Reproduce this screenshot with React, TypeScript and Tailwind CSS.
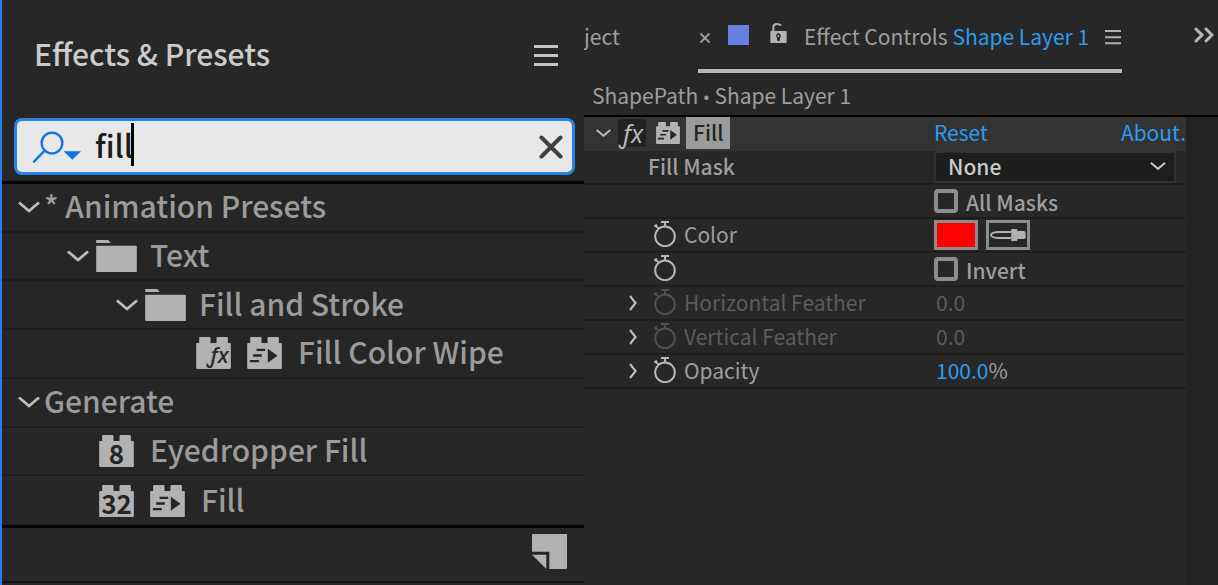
import { useState, type ReactNode } from "react";

const UI_FONT = "font-['Noto_Sans_CJK_SC','Noto_Sans',sans-serif]";

function ChevronDown({ className }: { className: string }) {
  return (
    <svg viewBox="0 0 22 14" className={className} fill="none" stroke="currentColor" strokeWidth="2.8" aria-hidden="true">
      <path d="M1 2.5 L11 11 L21 2.5" />
    </svg>
  );
}

function ChevronRight() {
  return (
    <svg viewBox="0 0 8 16" className="h-4 w-2" fill="none" stroke="currentColor" strokeWidth="2.1" aria-hidden="true">
      <path d="M1 1 L6.6 8 L1 15" />
    </svg>
  );
}

function Folder() {
  return (
    <svg viewBox="0 0 122 96" className="h-8 w-[41px] shrink-0" fill="#b2b2b2" aria-hidden="true">
      <path d="M0 0h36l8 9H0z" />
      <rect x="0" y="17" width="122" height="79" rx="2" />
    </svg>
  );
}

const BRICK = "M3 18 H9 V3 Q9 0 12 0 H40 Q43 0 43 3 V18 H61 V3 Q61 0 64 0 H92 Q95 0 95 3 V18 H101 Q104 18 104 21 V93 Q104 96 101 96 H3 Q0 96 0 93 V21 Q0 18 3 18 Z";

function Brick({ label, className = "h-8 w-[35px]" }: { label: string; className?: string }) {
  return (
    <svg viewBox="0 0 104 96" className={`${className} shrink-0 overflow-visible`} aria-hidden="true">
      <path d={BRICK} fill="#b2b2b2" />
      {label === "fx" ? (
        <text x="67" y="77" textAnchor="middle" className="fill-[#262626] font-['Noto_Sans'] text-[66px] italic">
          ƒx
        </text>
      ) : (
        <text x="52" y="86" textAnchor="middle" className="fill-[#262626] font-['Noto_Sans_CJK_SC'] text-[78px] font-bold">
          {label}
        </text>
      )}
    </svg>
  );
}

function FastBrick({ className = "h-8 w-[35px]" }: { className?: string }) {
  return (
    <svg viewBox="0 0 104 96" className={`${className} shrink-0`} aria-hidden="true">
      <path d={BRICK} fill="#b2b2b2" />
      <g fill="#262626">
        <path d="M28 35h26v7H28zM18 52h26v7H18zM8 69h27v7H8zM62 35l29 21-29 21z" />
      </g>
    </svg>
  );
}

function Stopwatch() {
  return (
    <svg viewBox="0 0 66 78" className="h-[26px] w-[22px] shrink-0" fill="none" stroke="currentColor" aria-hidden="true">
      <circle cx="33" cy="46" r="29.5" strokeWidth="6" />
      <path d="M21 3h24M33 5v12" strokeWidth="6" />
      <path d="M1 13l12 8M8 10l-4 9" strokeWidth="6" />
    </svg>
  );
}

function Menu({ className }: { className: string }) {
  return (
    <svg viewBox="0 0 24 22" className={className} fill="currentColor" aria-hidden="true" preserveAspectRatio="none">
      <path d="M0 0h24v3H0zM0 9h24v3H0zM0 18h24v3H0z" />
    </svg>
  );
}

function TreeRow({ indent, children }: { indent: string; children: ReactNode }) {
  return (
    <li className={`flex min-h-12 items-center border-b-2 border-[#1d1d1d] last:border-b-0 ${indent}`}>{children}</li>
  );
}

function Name({ children }: { children: ReactNode }) {
  return <span className="pb-1">{children}</span>;
}

function Toggle({ gap, children }: { gap: string; children: ReactNode }) {
  return (
    <button type="button" aria-expanded="true" className={`flex items-center ${gap}`}>
      <ChevronDown className="h-[14px] w-[22px] text-[#bdbdbd]" />
      {children}
    </button>
  );
}

function PresetsPanel() {
  const [query, setQuery] = useState("fill");
  return (
    <section className="flex flex-col border-l-2 border-[#2680eb]" aria-label="Effects & Presets">
      <header className="flex h-[118px] items-center justify-between pr-[26px] pb-[6px] pl-8">
        <h1 className="pb-[6px] text-[30px] leading-10 font-medium text-[#cbcbcb]">Effects &amp; Presets</h1>
        <button type="button" aria-label="Panel menu" className="text-[#c4c4c4]">
          <Menu className="h-[22px] w-6" />
        </button>
      </header>

      <div className="mr-[9px] ml-3 flex h-[57px] items-center rounded-lg border-3 border-[#2684ea] bg-[#e8e8e8] pr-[9px] pl-4">
        <label className="flex flex-1 items-center">
          <svg viewBox="0 0 144 96" className="h-8 w-12" fill="none" stroke="#1273e6" aria-hidden="true">
            <circle cx="57" cy="36" r="31" strokeWidth="7" />
            <path d="M35 59L3 92" strokeWidth="7" strokeLinecap="round" />
            <path d="M92 61h52l-26 25z" fill="#1273e6" stroke="none" />
          </svg>
          <input
            type="text"
            aria-label="Search effects"
            value={query}
            onChange={(e) => setQuery(e.target.value)}
            className="ml-[14px] h-[51px] [field-sizing:content] pb-1 text-[31px] leading-[47px] font-medium text-[#1c1c1c] caret-transparent outline-none"
          />
          <span className="-ml-[2px] mb-1 h-[43px] w-[3px] bg-black" />
        </label>
        <button type="button" aria-label="Clear search" onClick={() => setQuery("")} className="text-[#404040]">
          <svg viewBox="0 0 24 24" className="size-6" stroke="currentColor" strokeWidth="4" strokeLinecap="round" aria-hidden="true">
            <path d="M2.500 2.500L21.500 21.500M21.500 2.500L2.500 21.500" />
          </svg>
        </button>
      </div>

      <ul className="mt-[6px] grid flex-1 auto-rows-fr border-y-3 border-black bg-[#262626] text-[30px] leading-10 font-medium text-[#9b9b9b]">
        <TreeRow indent="pl-4">
          <Toggle gap="gap-1">
            <Name>* Animation Presets</Name>
          </Toggle>
        </TreeRow>
        <TreeRow indent="pl-[65px]">
          <Toggle gap="gap-[7px]">
            <span className="flex items-center gap-[13px]">
              <Folder />
              <Name>Text</Name>
            </span>
          </Toggle>
        </TreeRow>
        <TreeRow indent="pl-[114px]">
          <Toggle gap="gap-[7px]">
            <span className="flex items-center gap-[13px]">
              <Folder />
              <Name>Fill and Stroke</Name>
            </span>
          </Toggle>
        </TreeRow>
        <TreeRow indent="gap-4 pl-[194px]">
          <Brick label="fx" />
          <FastBrick />
          <Name>Fill Color Wipe</Name>
        </TreeRow>
        <TreeRow indent="pl-4">
          <Toggle gap="gap-1">
            <Name>Generate</Name>
          </Toggle>
        </TreeRow>
        <TreeRow indent="gap-4 pl-[97px]">
          <Brick label="8" />
          <Name>Eyedropper Fill</Name>
        </TreeRow>
        <TreeRow indent="gap-4 pl-[97px]">
          <Brick label="32" />
          <FastBrick />
          <Name>Fill</Name>
        </TreeRow>
      </ul>

      <footer className="mb-[2px] flex h-[55px] items-start justify-end border-b-2 border-[#161616] pt-[6px] pr-[17px]">
        <button type="button" aria-label="Create new animation preset">
          <svg viewBox="0 0 105 105" className="size-[35px]" fill="#b2b2b2" aria-hidden="true">
            <path d="M2 0h101l2 2v101l-2 2H52V53H0V2z" />
            <path d="M0 62h43v43z" />
          </svg>
        </button>
      </footer>
    </section>
  );
}

function PropRow({ label, children }: { label?: ReactNode; children?: ReactNode }) {
  return (
    <div className="flex h-[34px] items-center border-b-2 border-[#1d1d1d]">
      <div className="flex w-[350px] shrink-0 items-center">{label}</div>
      <div className="flex min-w-0 flex-1 items-center">{children}</div>
    </div>
  );
}

function Keyed({ name, expandable, dim }: { name?: string; expandable?: boolean; dim?: boolean }) {
  return (
    <>
      <span className="flex w-[70px] justify-end pr-[17px]">
        {expandable && (
          <button type="button" aria-label={`Expand ${name}`} className="text-[#bdbdbd]">
            <ChevronRight />
          </button>
        )}
      </span>
      <button type="button" aria-label="Toggle animation" className={dim ? "pb-[2px] text-[#505050]" : "pb-[2px] text-[#b8b8b8]"}>
        <Stopwatch />
      </button>
      <span className={dim ? "ml-2 pb-[2px] text-[#5c5c5c]" : "ml-2 pb-[2px]"}>{name}</span>
    </>
  );
}

function Check({ name }: { name: string }) {
  return (
    <label className="flex items-center gap-2 font-medium">
      <input type="checkbox" className="size-6 appearance-none rounded-sm border-4 border-[#8c8c8c] checked:bg-[#2d9bf0]" />
      <span className="pt-[2px]">{name}</span>
    </label>
  );
}

function ControlsPanel() {
  return (
    <section className="flex min-w-0 flex-col text-[21px] leading-7 text-[#9e9e9e]" aria-label="Effect Controls">
      <div className="flex h-[73px] items-stretch justify-between overflow-hidden">
        <button type="button" className="w-[114px] pb-[2px] text-left">
          ject
        </button>
        <div className="flex shrink-0 items-center border-b-4 border-[#b8b8b8] pt-1">
          <button type="button" aria-label="Close tab" className="mr-[17px] ml-px pt-[2px]">
            <svg viewBox="0 0 12 12" className="size-3" stroke="currentColor" strokeWidth="1.8" aria-hidden="true">
              <path d="M1.5 1.5L10.500 10.500M10.500 1.500L1.500 10.500" />
            </svg>
          </button>
          <span className="mr-[21px] mb-1 h-5 w-[21px] bg-[#677fe0]" />
          <svg viewBox="0 0 51 60" className="mr-[17px] mb-2 h-5 w-[17px]" aria-hidden="true">
            <path d="M10 26V14Q10 3 21 3Q29 3 33 8" fill="none" stroke="#b2b2b2" strokeWidth="6" />
            <rect x="1" y="24" width="49" height="36" rx="2" fill="#b2b2b2" />
            <path d="M25 30a9 9 0 0 1 5 15v8h-9v-8a9 9 0 0 1 4-15z" fill="#262626" />
            <circle cx="25" cy="39" r="3" fill="#b2b2b2" />
          </svg>
          <span className="pb-[2px] whitespace-nowrap">
            Effect Controls <span className="text-[#2d9bf0]">Shape Layer 1</span>
          </span>
          <button type="button" aria-label="Panel menu" className="mr-px pt-[2px] pl-4 text-[#b0b0b0]">
            <Menu className="h-[15px] w-4" />
          </button>
        </div>
        <button type="button" aria-label="More panels" className="mr-1 ml-auto pb-1 text-[#b8b8b8]">
          <svg viewBox="0 0 20 16" className="h-4 w-5" fill="none" stroke="currentColor" strokeWidth="3" strokeLinecap="round" aria-hidden="true">
            <path d="M2 2L8 8L2 14M12 2L18 8L12 14" />
          </svg>
        </button>
      </div>

      <div className="flex h-[44px] items-center border-b-2 border-black pt-1 pl-2">
        <span>
          ShapePath <span className="font-['Noto_Sans'] text-lg">•</span> Shape Layer 1
        </span>
      </div>

      <div className="flex flex-1">
        <div className="min-w-0 flex-1">
          <div className="flex h-[34px] items-center bg-[#333333]">
            <div className="flex w-[350px] shrink-0 items-center self-start">
              <button type="button" aria-label="Collapse Fill" className="ml-3 text-[#bdbdbd]">
                <ChevronDown className="h-[10px] w-[15px]" />
              </button>
              <button
                type="button"
                aria-label="Toggle effect"
                className="ml-[7px] h-7 w-7 bg-[#222222] text-center font-['Noto_Sans'] text-[25px] leading-6 text-[#b8b8b8] italic"
              >
                ƒx
              </button>
              <span className="ml-[10px]">
                <FastBrick className="h-[22px] w-6" />
              </span>
              <span className="ml-[6px] h-8 bg-[#9b9b9b] px-[7px] leading-[30px] font-medium text-[#242424]">Fill</span>
            </div>
            <div className="flex flex-1 justify-between pb-1 text-[#2d9bf0]">
              <button type="button">Reset</button>
              <button type="button">About.</button>
            </div>
          </div>

          <PropRow label={<label htmlFor="mask" className="pb-[2px] pl-16 font-medium">Fill Mask</label>}>
            <div className="relative mr-[10px] h-8 flex-1">
              <select
                id="mask"
                className="h-full w-full appearance-none border-2 border-[#303030] bg-[#1d1d1d] pb-[2px] pl-3 leading-[26px] font-medium text-[#cbcbcb]"
              >
                <option>None</option>
              </select>
              <span className="pointer-events-none absolute top-[10px] right-[10px] text-[#c4c4c4]">
                <ChevronDown className="h-[10px] w-4" />
              </span>
            </div>
          </PropRow>
          <PropRow>
            <Check name="All Masks" />
          </PropRow>
          <PropRow label={<Keyed name="Color" />}>
            <button type="button" aria-label="Fill color" className="h-[30px] w-11 border-3 border-[#8c8c8c] bg-[#ff0000]" />
            <button
              type="button"
              aria-label="Pick color"
              className="ml-2 flex h-[30px] w-11 items-center justify-center border-3 border-[#8c8c8c]"
            >
              <svg viewBox="0 0 110 36" className="h-3 w-9" aria-hidden="true">
                <path d="M65 9H24Q4 10 3 18Q4 26 24 27H65" fill="none" stroke="#b2b2b2" strokeWidth="6" />
                <path d="M65 0h18v6h20q6 0 6 6v12q0 6-6 6H83v6H65z" fill="#b2b2b2" />
              </svg>
            </button>
          </PropRow>
          <PropRow label={<Keyed />}>
            <Check name="Invert" />
          </PropRow>
          <PropRow label={<Keyed name="Horizontal Feather" expandable dim />}>
            <span className="pb-[2px] pl-[2px] text-[#5c5c5c]">0.0</span>
          </PropRow>
          <PropRow label={<Keyed name="Vertical Feather" expandable dim />}>
            <span className="pb-[2px] pl-[2px] text-[#5c5c5c]">0.0</span>
          </PropRow>
          <PropRow label={<Keyed name="Opacity" expandable />}>
            <span className="pb-[2px] pl-[2px]">
              <span className="text-[#2d9bf0]">100.0</span>%
            </span>
          </PropRow>
        </div>
        <div className="w-8 bg-[#222222]" />
      </div>
    </section>
  );
}

export default function App() {
  return (
    <main className={`grid min-h-screen grid-cols-[584fr_634fr] bg-[#272727] ${UI_FONT}`}>
      <PresetsPanel />
      <ControlsPanel />
    </main>
  );
}
